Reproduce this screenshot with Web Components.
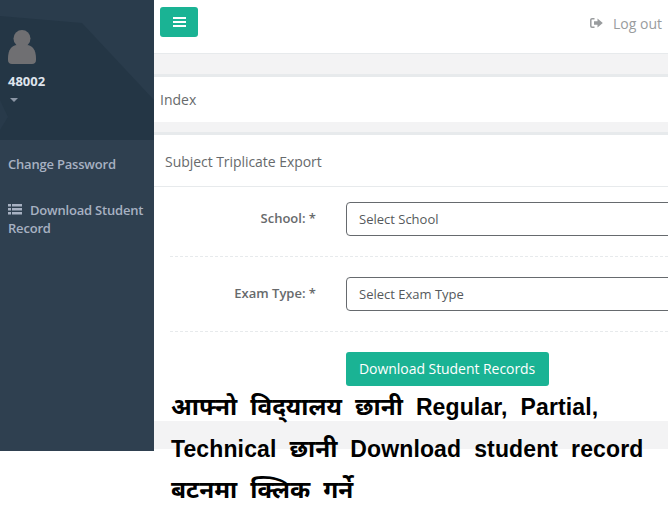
<!DOCTYPE html>
<html lang="en">
<head>
<meta charset="utf-8">
<title>Subject Triplicate Export</title>
<style>
  html, body { margin: 0; background: #fff; }
  body { font-family: "Open Sans", sans-serif; font-size: 13px; color: #676a6c; }
  overlay-note span span { font-size: 24.400px; letter-spacing: 0; }
</style>
</head>
<body>
<app-shell>
  <side-nav slot="side" user="48002">
    <a slot="links">Change Password</a>
    <a slot="links" data-icon="list">Download Student Record</a>
  </side-nav>
  <top-bar></top-bar>
  <page-heading>Index</page-heading>
  <form-panel heading="Subject Triplicate Export">
    <form-row label="School: *" placeholder="Select School"></form-row>
    <form-row label="Exam Type: *" placeholder="Select Exam Type"></form-row>
    <button-row>Download Student Records</button-row>
  </form-panel>
  <page-footer></page-footer>
</app-shell>
<overlay-note>
  <span><span lang="ne">आफ्नो</span> <span lang="ne">विद्&zwnj;यालय</span> <span lang="ne">छानी</span> Regular, Partial,</span>
  <span>Technical <span lang="ne">छानी</span> Download student record</span>
  <span><span lang="ne">बटनमा</span> <span lang="ne">क्लिक</span> <span lang="ne">गर्ने</span></span>
</overlay-note>

<script>
class AppShell extends HTMLElement {
  constructor() {
    super();
    this.attachShadow({ mode: 'open' });
  }

  connectedCallback() {
    this.shadowRoot.innerHTML = `
      <style>
        :host { display: flex; width: 668px; height: 451px; overflow: hidden; }
        .main { flex: 1; min-width: 0; height: 449px; display: flex; flex-direction: column; background: #f3f3f4; overflow: hidden; }
      </style>
      <slot name="side"></slot>
      <div class="main"><slot></slot></div>
    `;
  }
}

class SideNav extends HTMLElement {
  constructor() {
    super();
    this.attachShadow({ mode: 'open' });
  }

  connectedCallback() {
    const user = this.getAttribute('user');
    this.shadowRoot.innerHTML = `
      <style>
        :host { display: flex; flex-direction: column; flex: 0 0 154px; width: 154px; height: 451px; background: #2f4050; }
        .profile { position: relative; height: 140px; box-sizing: border-box; padding: 30px 8px 0; background: #2a3c4c; overflow: hidden; }
        .shape { position: absolute; left: 0; top: 0; }
        .profile > div, .profile > svg.avatar { position: relative; }
        .avatar { display: block; }
        .name { margin-top: 8px; font-size: 13px; line-height: 18px; font-weight: 700; color: #dfe4ed; }
        .caret { width: 0; height: 0; margin-top: 8px; margin-left: 2px; border: 4px solid transparent; border-top-color: #8b96a5; border-bottom: 0; }
        nav { padding: 15px 8px 0; }
        ::slotted(a) { display: block; color: #a7b1c2; font-weight: 600; font-size: 13px; line-height: 18px; margin-bottom: 28px; letter-spacing: -0.2px; }
      </style>
      <div class="profile">
        <svg class="shape" width="154" height="140" viewBox="0 0 154 140">
          <polygon fill="#243645" points="0,16 82,23 154,100 154,140 0,140"/>
          <polygon fill="#283a4a" points="0,100 8,117 0,130"/>
        </svg>
        <svg class="avatar" width="28" height="34" viewBox="0 0 28 34">
          <circle cx="14" cy="8.5" r="8.5" fill="#6f6f72"/>
          <path d="M0 28 C0 20 4 15 9 15 H19 C24 15 28 20 28 28 V30 C28 32.500 26.500 34 24 34 H4 C1.500 34 0 32.500 0 30 Z" fill="#6f6f72"/>
        </svg>
        <div class="name">${user}</div>
        <div class="caret"></div>
      </div>
      <nav><slot name="links"></slot></nav>
    `;
    const listLink = this.querySelector('[data-icon="list"]');
    if (listLink && !listLink.querySelector('svg')) {
      listLink.insertAdjacentHTML('afterbegin', `
        <svg width="14" height="11" viewBox="0 0 14 11" style="margin-right:8px;vertical-align:0">
          <path fill="#a7b1c2" d="M0 0h3v2.500H0zM4 0h10v2.500H4zM0 4h3v2.500H0zM4 4h10v2.500H4zM0 8h3v2.500H0zM4 8h10v2.500H4z"/>
        </svg>`);
    }
  }
}

class TopBar extends HTMLElement {
  constructor() {
    super();
    this.attachShadow({ mode: 'open' });
  }

  connectedCallback() {
    this.shadowRoot.innerHTML = `
      <style>
        :host { display: flex; flex: 0 0 53px; justify-content: space-between; box-sizing: content-box; height: 53px; background: #fff; border-bottom: 1px solid #e7eaec; }
        .toggle { display: flex; align-items: center; justify-content: center; width: 38px; height: 30px; margin: 7px 0 0 6px; border-radius: 3px; background: #1ab394; }
        .logout { display: flex; align-items: center; gap: 10px; height: 46px; margin-right: 6px; color: #999c9e; font-size: 14px; }
      </style>
      <div class="toggle">
        <svg width="13" height="10" viewBox="0 0 13 10"><path fill="#fff" d="M0 0h13v2H0zM0 4h13v2H0zM0 8h13v2H0z"/></svg>
      </div>
      <div class="logout">
        <svg width="13" height="10" viewBox="0 0 13 10">
          <path fill="none" stroke="#999c9e" stroke-width="1.500" d="M4.500 .8H2A1.200 1.200 0 0 0 .8 2v6A1.200 1.200 0 0 0 2 9.200h2.500"/>
          <path fill="#999c9e" d="M4 3.200h3.500V.6L12.800 5 7.500 9.400V6.800H4z"/>
        </svg>
        <span>Log out</span>
      </div>
    `;
  }
}

class PageHeading extends HTMLElement {
  constructor() {
    super();
    this.attachShadow({ mode: 'open' });
  }

  connectedCallback() {
    this.shadowRoot.innerHTML = `
      <style>
        :host { display: block; margin-top: 20px; border-top: 3px solid #e7eaec; height: 45px; background: #fff; padding-left: 6px; font-size: 14px; font-weight: 500; line-height: 46px; color: #676a6c; }
      </style>
      <slot></slot>
    `;
  }
}

class FormPanel extends HTMLElement {
  constructor() {
    super();
    this.attachShadow({ mode: 'open' });
  }

  connectedCallback() {
    this.shadowRoot.innerHTML = `
      <style>
        :host { display: block; margin-top: 10px; border-top: 3px solid #e7eaec; background: #fff; }
        h5 { margin: 0; height: 51px; box-sizing: content-box; padding-left: 11px; border-bottom: 1px solid #e7eaec; font-size: 14px; font-weight: 500; letter-spacing: -0.05px; line-height: 54px; color: #676a6c; }
        .body { padding: 15px 0 35px 16px; }
      </style>
      <h5>${this.getAttribute('heading')}</h5>
      <div class="body"><slot></slot></div>
    `;
  }
}

class FormRow extends HTMLElement {
  constructor() {
    super();
    this.attachShadow({ mode: 'open' });
  }

  connectedCallback() {
    this.shadowRoot.innerHTML = `
      <style>
        :host { display: grid; grid-template-columns: 146px 1fr; column-gap: 30px; align-items: start; padding-bottom: 20px; margin-bottom: 20px; border-bottom: 1px dashed #e7eaec; }
        label { text-align: right; font-weight: 600; font-size: 13px; line-height: 32px; color: #676a6c; }
        .input { box-sizing: border-box; height: 34px; margin-right: -10px; padding-left: 12px; border: 1px solid #666a6e; border-radius: 4px; font-size: 13px; line-height: 32px; color: #55595c; }
      </style>
      <label>${this.getAttribute('label')}</label>
      <div class="input">${this.getAttribute('placeholder')}</div>
    `;
  }
}

class ButtonRow extends HTMLElement {
  constructor() {
    super();
    this.attachShadow({ mode: 'open' });
  }

  connectedCallback() {
    this.shadowRoot.innerHTML = `
      <style>
        :host { display: flex; padding-left: 176px; }
        .btn { box-sizing: border-box; height: 34px; width: 203px; padding-left: 13px; border-radius: 3px; background: #1ab394; color: #fff; font-size: 14px; font-weight: 500; letter-spacing: -0.05px; line-height: 33px; white-space: nowrap; }
      </style>
      <div class="btn"><slot></slot></div>
    `;
  }
}

class PageFooter extends HTMLElement {
  constructor() {
    super();
    this.attachShadow({ mode: 'open' });
  }

  connectedCallback() {
    this.shadowRoot.innerHTML = `
      <style>
        :host { display: block; flex: 1; background: #f3f3f4; }
      </style>
    `;
  }
}

class OverlayNote extends HTMLElement {
  constructor() {
    super();
    this.attachShadow({ mode: 'open' });
  }

  connectedCallback() {
    this.shadowRoot.innerHTML = `
      <style>
        :host { position: absolute; left: 171px; top: 386px; display: block; font-family: "Liberation Sans", "Noto Sans", sans-serif; font-size: 23px; font-weight: 700; color: #000; word-spacing: 6.500px; letter-spacing: 0.120px; }
        ::slotted(span) { display: block; height: 41.500px; line-height: 41.500px; white-space: nowrap; }
      </style>
      <slot></slot>
    `;
  }
}

customElements.define('app-shell', AppShell);
customElements.define('side-nav', SideNav);
customElements.define('top-bar', TopBar);
customElements.define('page-heading', PageHeading);
customElements.define('form-panel', FormPanel);
customElements.define('form-row', FormRow);
customElements.define('button-row', ButtonRow);
customElements.define('page-footer', PageFooter);
customElements.define('overlay-note', OverlayNote);
</script>
</body>
</html>
